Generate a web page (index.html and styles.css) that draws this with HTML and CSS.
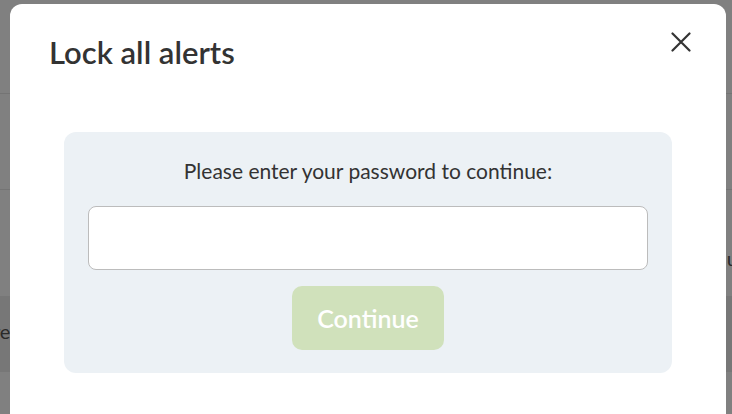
FILE: index.html
```html
<!DOCTYPE html>
<html>
<head>
<meta charset="utf-8">
<link rel="stylesheet" href="styles.css">
</head>
<body>
<div class="page">
  <div class="row r1"></div>
  <div class="row r2"></div>
  <div class="row r3"><span class="ghost-right">u</span></div>
  <div class="row band"><span class="ghost-left">are</span></div>
  <div class="row r5"></div>
</div>
<div class="backdrop">
  <div class="modal">
    <div class="modal-head">
      <h2 class="modal-title">Lock all alerts</h2>
      <button class="close" aria-label="Close">
        <svg width="20" height="20" viewBox="0 0 20 20"><path d="M1.5 1.5 L18.5 18.5 M18.5 1.5 L1.5 18.5" stroke="#333" stroke-width="2.2" stroke-linecap="round" fill="none"/></svg>
      </button>
    </div>
    <div class="panel">
      <p class="prompt">Please enter your password to continue:</p>
      <input class="pw" type="password">
      <button class="continue">Continue</button>
    </div>
  </div>
</div>
</body>
</html>
```
FILE: styles.css
```css
html, body { margin: 0; padding: 0; }
body {
  background: #808080;
  font-family: "Lato", "Open Sans", sans-serif;
  color: #333;
  width: 732px;
  height: 414px;
  overflow: hidden;
}
.page { display: flex; flex-direction: column; }
.row { border-bottom: 1px solid #747474; box-sizing: border-box; position: relative; display: flex; align-items: center; }
.r1 { height: 94px; }
.r2 { height: 96px; }
.r3 { height: 106px; border-bottom: none; justify-content: flex-end; }
.band { height: 76px; background: #777777; border-bottom: none; }
.r5 { height: 42px; border: none; }
.ghost-right { font-size: 20px; color: #2a2a2a; margin-top: 30px; margin-right: -6px; }
.ghost-left { font-size: 20px; color: #2a2a2a; margin-left: -17px; margin-top: -6px; }
.backdrop { position: fixed; inset: 0; }
.modal {
  position: absolute;
  left: 10px; top: 4px;
  width: 716px; height: 430px;
  background: #fff;
  border-radius: 12px;
  box-sizing: border-box;
  padding: 0 54px;
}
.modal-head { display: flex; justify-content: space-between; align-items: center; height: 100px; margin-left: -15px; margin-right: -29px; }
.modal-title { margin: 0; font-size: 31px; font-weight: 600; color: #333; padding-bottom: 4px; }
.close { background: none; border: none; padding: 0; width: 40px; height: 40px; display: flex; align-items: center; justify-content: center; margin-top: -24px; }
.panel {
  margin-top: 28px;
  background: #ecf1f5;
  border-radius: 12px;
  padding: 26px 24px 23px;
  display: flex; flex-direction: column; align-items: center;
}
.prompt { margin: 0 0 23px; font-size: 21px; color: #333; }
.pw { width: 100%; box-sizing: border-box; height: 64px; border: 1px solid #bcbcbc; border-radius: 8px; background: #fff; margin: 0 0 16px; }
.continue {
  width: 152px; height: 64px; border: none; border-radius: 10px;
  background: #d0e1bb; color: #fff; font-family: inherit; font-size: 25px; font-weight: 600;
}
```
